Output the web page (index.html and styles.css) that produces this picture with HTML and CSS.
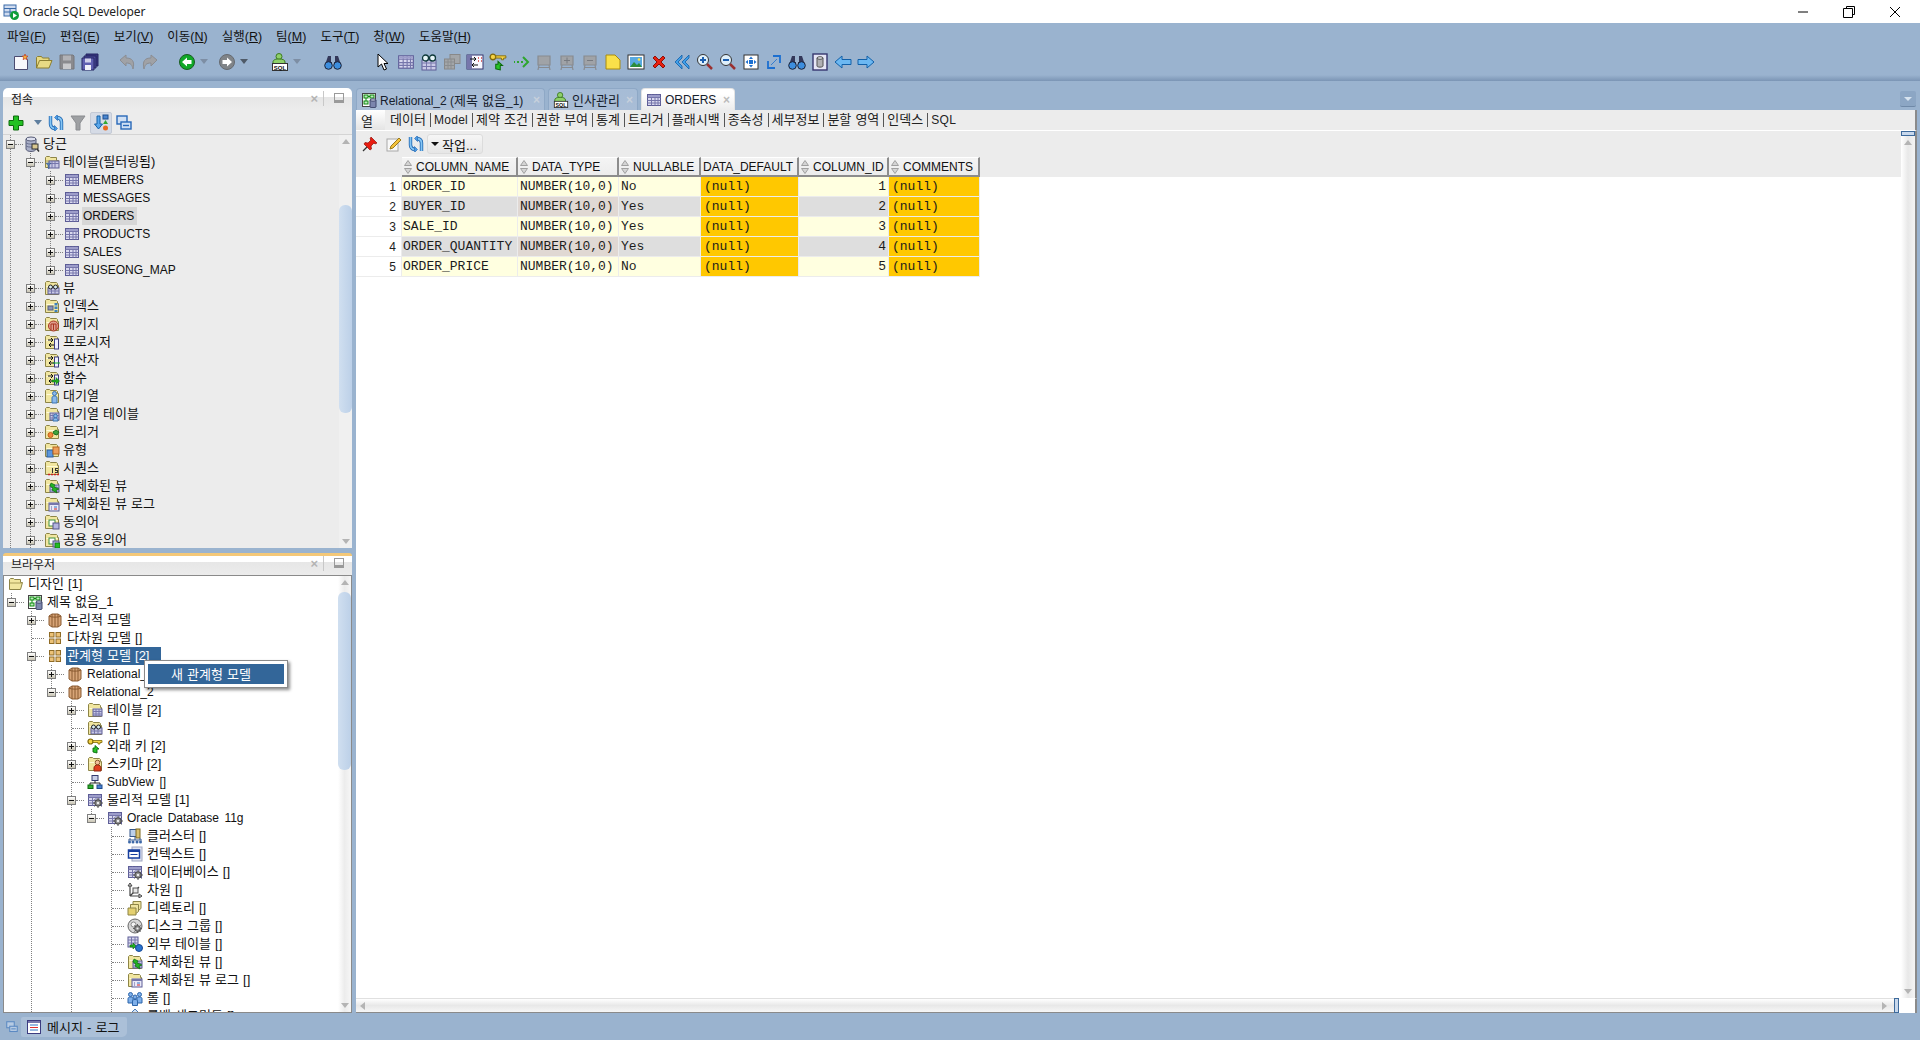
FILE: index.html
```html
<!DOCTYPE html>
<html lang="ko">
<head>
<meta charset="utf-8">
<title>Oracle SQL Developer</title>
<link rel="stylesheet" href="styles.css">
</head>
<body>
<svg class="sprites" xmlns="http://www.w3.org/2000/svg">
<defs>
<symbol id="sort" viewBox="0 0 8 14"><path d="M4 .5L7.500 5.500H.5zM.5 8.500h7L4 13.500z" fill="#d4d4d4" stroke="#a0a0a0"/></symbol>
<symbol id="folder" viewBox="0 0 16 16"><path d="M1.500 14.500v-12l1-1h3l1 1h6l1 1v2h1v9z" fill="#f1e6a0" stroke="#8d8446"/><path d="M2.500 6.500h11" stroke="#fffbd8"/></symbol>
<symbol id="folderopen" viewBox="0 0 16 16"><path d="M1.500 13.500v-10l1-1h3l1 1h6v3h2l-2 7z" fill="#f1e6a0" stroke="#8d8446"/><path d="M2 7h12" stroke="#a89c58"/></symbol>
<symbol id="tbl" viewBox="0 0 16 16"><rect x="1.500" y="2.500" width="13" height="11" fill="#d9d9ef" stroke="#5c5c96"/><path d="M1.500 5.500h13M1.500 8.500h13M1.500 11h13M5.500 2.500v11M9 2.500v11M12 2.500v11" stroke="#7676ab" fill="none"/><rect x="2" y="3" width="12" height="2" fill="#9d9dca"/></symbol>
<symbol id="gear" viewBox="0 0 10 10"><circle cx="5" cy="5" r="3.200" fill="#8c8c8c" stroke="#444"/><circle cx="5" cy="5" r="1.200" fill="#eee"/><path d="M5 0v2M5 8v2M0 5h2M8 5h2M1.500 1.500l1.400 1.400M7.100 7.100l1.400 1.400M1.500 8.500l1.400-1.400M7.100 2.900l1.400-1.400" stroke="#555"/></symbol>
<symbol id="db" viewBox="0 0 16 16"><path d="M2 3v10c0 1.500 2.500 2.500 5 2.500s5-1 5-2.500V3z" fill="#aab0c8" stroke="#555a75"/><ellipse cx="7" cy="3" rx="5" ry="2" fill="#dcdfee" stroke="#555a75"/><path d="M2 7c2 1.500 8 1.500 10 0M2 10c2 1.500 8 1.500 10 0" stroke="#6a7090" fill="none"/><rect x="8" y="8" width="6" height="5" fill="#d9c890" stroke="#333"/><path d="M13 13l2 2.500" stroke="#333" stroke-width="1.500"/></symbol>
<symbol id="ftbl" viewBox="0 0 16 16"><use href="#folder" width="16" height="16"/><rect x="6" y="7" width="9" height="7" fill="#c9c9e6" stroke="#5c5c96"/><path d="M6 9.500h9M6 12h9M9 7v7M12 7v7" stroke="#7676ab"/></symbol>
<symbol id="ffilter" viewBox="0 0 16 16"><use href="#folderopen" width="16" height="16"/><rect x="5" y="7" width="10" height="7" fill="#c9c9e6" stroke="#5c5c96"/><path d="M5 9.500h10M8 7v7M11 7v7" stroke="#7676ab"/><path d="M2 9h5l-2 2.500V15l-1-1v-2.500z" fill="#5b7fb5" stroke="#35568a" stroke-width=".5"/></symbol>
<symbol id="fview" viewBox="0 0 16 16"><use href="#folder" width="16" height="16"/><rect x="4" y="8" width="11" height="6" fill="#c9c9e6" stroke="#5c5c96"/><path d="M4 11h11M7.500 8v6M11 8v6" stroke="#7676ab"/><circle cx="6.500" cy="7" r="2" fill="#d8ecf2" stroke="#222"/><circle cx="11.500" cy="7" r="2" fill="#d8ecf2" stroke="#222"/></symbol>
<symbol id="findex" viewBox="0 0 16 16"><use href="#folder" width="16" height="16"/><rect x="4" y="8" width="5" height="4" fill="#8a93b5" stroke="#555c80"/><path d="M12 5v9" stroke="#3d82bf" stroke-width="3" stroke-dasharray="2.500 1"/></symbol>
<symbol id="fpkg" viewBox="0 0 16 16"><use href="#folder" width="16" height="16"/><circle cx="9.500" cy="10" r="5" fill="#e0a090" stroke="#a8331f"/><path d="M7 14V8h5v6M9.500 8v6" stroke="#a8331f" fill="none"/></symbol>
<symbol id="fproc" viewBox="0 0 16 16"><use href="#folder" width="16" height="16"/><rect x="10.500" y="5" width="4" height="10" fill="#eef" stroke="#3c3c80"/><path d="M4 6h5m-2-2 2 2-2 2M10 11H5m2-2-2 2 2 2" stroke="#111" fill="none"/></symbol>
<symbol id="fop" viewBox="0 0 16 16"><use href="#fproc" width="16" height="16"/><path d="M9 11h7" stroke="#11aa22"/></symbol>
<symbol id="ffunc" viewBox="0 0 16 16"><use href="#fproc" width="16" height="16"/><path d="M8 10h4V7.500l3.500 3.500-3.500 3.500V12H8z" fill="#22aa22" stroke="#0c6a0c" stroke-width=".5"/></symbol>
<symbol id="fqueue" viewBox="0 0 16 16"><use href="#folder" width="16" height="16"/><circle cx="10.500" cy="5.500" r="2" fill="#8bb8ea" stroke="#3b74b3"/><path d="M8 15v-5c0-1.500 1-2 2.500-2s2.500.5 2.500 2v5z" fill="#8bb8ea" stroke="#3b74b3"/></symbol>
<symbol id="fqtbl" viewBox="0 0 16 16"><use href="#ftbl" width="16" height="16"/><circle cx="11.500" cy="10" r="1.800" fill="#8bb8ea" stroke="#3b74b3"/><path d="M9 15c0-2 1-3 2.500-3s2.500 1 2.500 3z" fill="#8bb8ea" stroke="#3b74b3"/></symbol>
<symbol id="ftrig" viewBox="0 0 16 16"><use href="#folder" width="16" height="16"/><circle cx="6.500" cy="11" r="2.500" fill="#ef8a3c" stroke="#c45f18"/><path d="M9 8l3-2 3 2-2 3-3-1z" fill="#3fa53f" stroke="#1f701f"/></symbol>
<symbol id="ftype" viewBox="0 0 16 16"><use href="#folder" width="16" height="16"/><rect x="3" y="8" width="6" height="7" fill="#5b96dc" stroke="#2d5e9c"/><rect x="9" y="5" width="6" height="7" fill="#ec9e5c" stroke="#b5651e"/></symbol>
<symbol id="fseq" viewBox="0 0 16 16"><use href="#folder" width="16" height="16"/><path d="M8 8h1v5H8zM11 8h3v1h-2v1h2v3h-3v-1h2v-1h-2z" fill="#333"/><path d="M4 14.500h11" stroke="#c22" stroke-dasharray="2 1" stroke-width="1.500"/></symbol>
<symbol id="fmv" viewBox="0 0 16 16"><use href="#ftbl" width="16" height="16"/><path d="M7 5l4 2-1 2 5 2-3 1 1 3-5-3 1-2-3-2z" fill="#22b522" stroke="#0b6a0b" stroke-width=".7"/></symbol>
<symbol id="fmvl" viewBox="0 0 16 16"><use href="#folder" width="16" height="16"/><rect x="5" y="7" width="10" height="8" fill="#e9e9f8" stroke="#5c5c96"/><rect x="5" y="7" width="10" height="2" fill="#7676ab"/><path d="M7 11h1M7 13h1" stroke="#5c5c96"/><path d="M10 11h3" stroke="#3074c4"/><path d="M10 13h3" stroke="#d62020"/></symbol>
<symbol id="fsyn" viewBox="0 0 16 16"><use href="#folder" width="16" height="16"/><rect x="5" y="6" width="6" height="6" fill="#fff" stroke="#3e8e3e"/><rect x="9" y="9" width="6" height="6" fill="#b5b5e0" stroke="#55558a"/></symbol>
<symbol id="fpsyn" viewBox="0 0 16 16"><use href="#fsyn" width="16" height="16"/><rect x="11" y="11" width="5" height="5" fill="#22bb22" stroke="#0b6a0b" stroke-width=".7"/></symbol>
<symbol id="model" viewBox="0 0 16 16"><rect x="1.500" y="1.500" width="13" height="13" fill="#fff" stroke="#444"/><rect x="3" y="3" width="4" height="3" fill="#bfe8bf" stroke="#0a8a0a"/><rect x="3" y="9" width="4" height="3" fill="#bfe8bf" stroke="#0a8a0a"/><rect x="9" y="3" width="4" height="3" fill="#bfe8bf" stroke="#0a8a0a"/><path d="M5 6v3M7 4.500h2" stroke="#0a8a0a"/><path d="M9 8h6v7c0 .800-6 .800-6 0z" fill="#7c86ad" stroke="#40486c"/><ellipse cx="12" cy="8" rx="3" ry="1.200" fill="#c9cee2" stroke="#40486c"/></symbol>
<symbol id="cube" viewBox="0 0 16 16"><path d="M2 4l3-2h6l3 2v9l-3 2H5l-3-2z" fill="#d8a578" stroke="#8a5a30"/><path d="M5 2v13M8 2v13M11 2v13" stroke="#8a5a30"/><path d="M2 4c2 1.500 10 1.500 12 0" stroke="#8a5a30" fill="none"/></symbol>
<symbol id="boxes" viewBox="0 0 16 16"><g fill="#ecc278" stroke="#8f6b25"><rect x="2.500" y="2.500" width="4.500" height="4.500"/><rect x="9" y="2.500" width="4.500" height="4.500"/><rect x="2.500" y="9" width="4.500" height="4.500"/><rect x="9" y="9" width="4.500" height="4.500"/></g></symbol>
<symbol id="key" viewBox="0 0 16 16"><circle cx="3.500" cy="3.500" r="2.500" fill="#f4d244" stroke="#80690a" stroke-width="1.200"/><path d="M6 2.500h9v2h-2v1.500h-2V4.500H6z" fill="#f4d244" stroke="#80690a" stroke-width=".8"/><path d="M7 14v-4h2V7.500L13 11h-2v4z" transform="translate(-1 0)" fill="#28c428" stroke="#0b6a0b" stroke-width=".9"/></symbol>
<symbol id="fschema" viewBox="0 0 16 16"><use href="#folder" width="16" height="16"/><circle cx="10.500" cy="6.500" r="2.300" fill="#f0c09a" stroke="#8a5a30"/><path d="M7 15v-3c0-2 1.500-3 3.500-3s3.500 1 3.500 3v3z" fill="#e04020" stroke="#8f2410"/></symbol>
<symbol id="subview" viewBox="0 0 16 16"><rect x="5" y="1.500" width="6" height="5" fill="#c8cfe8" stroke="#333a70"/><path d="M8 7v2M3 11V9h10v2" stroke="#222" fill="none"/><rect x="1" y="11" width="5" height="3.500" fill="#30b030" stroke="#0b6a0b"/><rect x="10" y="11" width="5" height="3.500" fill="#4a80d0" stroke="#1f4c8c"/></symbol>
<symbol id="phys" viewBox="0 0 16 16"><use href="#tbl" width="16" height="16"/><use href="#gear" x="6" y="6" width="10" height="10"/></symbol>
<symbol id="cluster" viewBox="0 0 16 16"><rect x="3" y="1.500" width="8" height="7" fill="#bcd0ea" stroke="#34578c"/><rect x="9" y="1" width="4" height="9" fill="#d9c070" stroke="#7d6820"/><path d="M1 12h14M3 10v2M8 9v3M13 10v2" stroke="#34578c"/><g fill="#3d68a8"><circle cx="2.500" cy="14" r="1.500"/><circle cx="6" cy="14" r="1.500"/><circle cx="10" cy="14" r="1.500"/><circle cx="13.500" cy="14" r="1.500"/></g></symbol>
<symbol id="context" viewBox="0 0 16 16"><rect x="5" y="1" width="10" height="14" fill="#dfe3f0" stroke="#a0a6c0"/><rect x="1.500" y="4" width="11" height="8" fill="#fff" stroke="#173f9f" stroke-width="1.500"/><rect x="2" y="4" width="10" height="2" fill="#173f9f"/><path d="M3.500 8.500h7" stroke="#173f9f"/></symbol>
<symbol id="dim" viewBox="0 0 16 16"><path d="M3 14V3M3 14h11M3 14l9-9" stroke="#444" fill="none" stroke-width="1.200"/><path d="M1 4l2-3 2 3zM12 12l3 2-3 2z" fill="#ddd" stroke="#444"/><rect x="6" y="6" width="5" height="5" fill="#e8e8e8" stroke="#555"/></symbol>
<symbol id="dir" viewBox="0 0 16 16"><path d="M6 1.500h8v7l-2 1.500H6z" fill="#efe3a0" stroke="#8d8446"/><path d="M3.500 4.500h8v7l-2 1.500h-6z" fill="#efe3a0" stroke="#8d8446"/><path d="M1 8h8v7H1z" fill="#e4d070" stroke="#8d8446"/></symbol>
<symbol id="disk" viewBox="0 0 16 16"><circle cx="8" cy="8" r="7" fill="#d6d6d6" stroke="#666"/><circle cx="6.500" cy="6.500" r="2.500" fill="#f4f4f4" stroke="#888"/><use href="#gear" x="6" y="6" width="9" height="9"/></symbol>
<symbol id="ext" viewBox="0 0 16 16"><rect x="1" y="1" width="10" height="10" fill="#d9d9ef" stroke="#5c5c96"/><path d="M1 4h10M1 7h10M4.500 1v10M8 1v10" stroke="#7676ab"/><path d="M3 9h3V7l3 3-3 3v-2H3z" fill="#22b522" stroke="#0b6a0b" stroke-width=".6"/><circle cx="12" cy="12" r="3.500" fill="#2a74d0" stroke="#164a96"/></symbol>
<symbol id="roles" viewBox="0 0 16 16"><g fill="#7fb0ea" stroke="#2d65aa"><circle cx="3.500" cy="4.500" r="2"/><circle cx="12.500" cy="4.500" r="2"/><path d="M1 13V8.500c0-1 1-1.500 2.500-1.500S6 7.500 6 8.500V13zM10 13V8.500c0-1 1-1.500 2.500-1.500S15 7.500 15 8.500V13z"/><circle cx="8" cy="7" r="2"/><path d="M5.500 15.500v-4.500c0-1 1-1.500 2.500-1.500s2.500.5 2.500 1.500v4.500z"/></g></symbol>
<symbol id="rollback" viewBox="0 0 16 16"><path d="M8 1l6 6-6 6-6-6z" fill="#cfe0f4" stroke="#4b7cb8"/></symbol>
<symbol id="tnew" viewBox="0 0 18 18"><path d="M2.500 3.500h10l3 3v10h-13z" fill="#f8f8fc" stroke="#4b4b70"/><path d="M13 1l.8 2 2.200.2-1.600 1.400.5 2.100-1.900-1.100-1.900 1.100.5-2.100L10 3.200l2.200-.2z" fill="#f5b33c" stroke="#c0391e" stroke-width=".7"/></symbol>
<symbol id="topen" viewBox="0 0 18 18"><path d="M1.500 15V4.500l1-1h4l1 1.500h6.500v2.500M1.500 15l3-7.500h12.500l-3 7.500z" fill="#e8da84" stroke="#8c7f32"/></symbol>
<symbol id="tsave" viewBox="0 0 18 18"><path d="M2 2h13l1 1v13H2z" fill="#8a8a8e" stroke="#77777b"/><rect x="5" y="2.500" width="8" height="5" fill="#b2b2b6"/><rect x="5" y="10.500" width="8" height="5.500" fill="#c9c9cc"/></symbol>
<symbol id="tsaveall" viewBox="0 0 18 18"><path d="M5 1h12v12H5z" fill="#34347e" stroke="#272762"/><path d="M3 3h12v12H3z" fill="#4a4a9a" stroke="#272762"/><path d="M1 5h12v12H1z" fill="#5f5fb0" stroke="#272762"/><rect x="4" y="5.500" width="6" height="4" fill="#d0d0ea"/><rect x="4" y="12" width="6" height="5" fill="#f0f0f8"/></symbol>
<symbol id="tundo" viewBox="0 0 18 18"><path d="M2 7l6-5v3c6 0 9 3 7 11-1-4-2-6-7-6v3z" fill="#a0a2a6" stroke="#8b8d92"/></symbol>
<symbol id="tredo" viewBox="0 0 18 18"><path d="M16 7l-6-5v3c-6 0-9 3-7 11 1-4 2-6 7-6v3z" fill="#a0a2a6" stroke="#8b8d92"/></symbol>
<symbol id="tback" viewBox="0 0 18 18"><circle cx="9" cy="9" r="7.500" fill="#10a828" stroke="#1a5c22"/><path d="M4 9l5-4.500V7h4.500v4H9v2.500z" fill="#fff"/></symbol>
<symbol id="tfwd" viewBox="0 0 18 18"><circle cx="9" cy="9" r="7.500" fill="#808488" stroke="#666a70"/><path d="M14 9L9 4.500V7H4.500v4H9v2.500z" fill="#fff"/></symbol>
<symbol id="tsql" viewBox="0 0 18 18"><circle cx="8" cy="3.500" r="3" fill="#8ed06a" stroke="#3c7a20"/><path d="M2 13V9c0-2 2-3 6-3s6 1 6 3v4z" fill="#8ed06a" stroke="#3c7a20"/><rect x="1.500" y="10.500" width="15" height="7" fill="#fff" stroke="#333"/><text x="9" y="16.500" class="mini">SQL</text></symbol>
<symbol id="bino" viewBox="0 0 18 18"><path d="M4 3h3v6h4V3h3l3 9H10V9H8v3H1z" fill="#33385a"/><circle cx="4.500" cy="12.500" r="3.800" fill="#3d8ede" stroke="#1b2238"/><circle cx="13.500" cy="12.500" r="3.800" fill="#3d8ede" stroke="#1b2238"/></symbol>
<symbol id="cursor" viewBox="0 0 18 18"><path d="M4 1v13l3.500-3 2.500 6 2.500-1-2.500-5.500H14z" fill="#fff" stroke="#000"/></symbol>
<symbol id="tview" viewBox="0 0 18 18"><rect x="2" y="7" width="14" height="10" fill="#c9c9e6" stroke="#5c5c96"/><path d="M2 10h14M2 13.500h14M6.500 7v10M11 7v10" stroke="#7676ab"/><circle cx="5.500" cy="5" r="3" fill="#e5f4f6" stroke="#0f3a3a" stroke-width="1.300"/><circle cx="12.500" cy="5" r="3" fill="#e5f4f6" stroke="#0f3a3a" stroke-width="1.300"/></symbol>
<symbol id="tgray" viewBox="0 0 18 18"><rect x="7" y="1.500" width="10" height="9" fill="#a3a6a9" stroke="#888"/><rect x="1.500" y="6" width="10" height="10" fill="#a3a6a9" stroke="#888"/><path d="M1.500 9h10M1.500 12.500h10M5 6v10M8 6v10" stroke="#8a8d90"/></symbol>
<symbol id="tmap" viewBox="0 0 18 18"><rect x="1" y="2" width="16" height="14" fill="#f8f8ff" stroke="#36366e"/><rect x="1" y="2" width="5" height="14" fill="#7676ab"/><path d="M4 6h6m-2-2 2 2-2 2M12 12H6m2-2-2 2 2 2" stroke="#111" fill="none"/><path d="M12 5h1M15 5h1M12 8h1M15 8h1" stroke="#d04040" stroke-width="1.500"/></symbol>
<symbol id="tdots" viewBox="0 0 18 18"><path d="M2 9h1M5 9h2M9 9h2" stroke="#2ea52e" stroke-width="2"/><path d="M11 4l5 5-5 5" fill="none" stroke="#2ea52e" stroke-width="2"/></symbol>
<symbol id="tg" viewBox="0 0 18 18"><path d="M3 3h12v9H3zM4 12l-1 5M14 12l1 5M3 14.500h12" fill="#a0a3a7" stroke="#888b90" stroke-width="1.200"/></symbol>
<symbol id="tgp" viewBox="0 0 18 18"><use href="#tg" width="18" height="18"/><path d="M6 7.500h6M9 4.500v6" stroke="#777a80"/></symbol>
<symbol id="tgm" viewBox="0 0 18 18"><use href="#tg" width="18" height="18"/><path d="M6 7.500h6" stroke="#777a80"/></symbol>
<symbol id="note" viewBox="0 0 18 18"><path d="M2 2h9l5 5v9H2z" fill="#f9e04a" stroke="#a88b10"/></symbol>
<symbol id="pic" viewBox="0 0 18 18"><rect x="1" y="2" width="16" height="14" fill="#fff" stroke="#333"/><rect x="3" y="4" width="12" height="10" fill="#58a9e0"/><path d="M3 14l4-5 3 3 2-2 3 4z" fill="#2d8c3a"/><circle cx="12" cy="6.500" r="1.300" fill="#fbe44a"/></symbol>
<symbol id="redx" viewBox="0 0 18 18"><path d="M3 5l2-2 4 4 4-4 2 2-4 4 4 4-2 2-4-4-4 4-2-2 4-4z" fill="#e82010" stroke="#8f1008"/></symbol>
<symbol id="dbl" viewBox="0 0 18 18"><path d="M9 2L2 9l7 7v-3L5 9l4-4zM16 2L9 9l7 7v-3l-4-4 4-4z" fill="#3f9ee8" stroke="#1260a8" stroke-width=".8"/></symbol>
<symbol id="zin" viewBox="0 0 18 18"><path d="M11 11l5 5" stroke="#9a3030" stroke-width="2.500"/><circle cx="7" cy="7" r="5.500" fill="#dff0fb" stroke="#333"/><path d="M4 7h6M7 4v6" stroke="#1c5fb0" stroke-width="2"/></symbol>
<symbol id="zout" viewBox="0 0 18 18"><path d="M11 11l5 5" stroke="#9a3030" stroke-width="2.500"/><circle cx="7" cy="7" r="5.500" fill="#dff0fb" stroke="#333"/><path d="M4 7h6" stroke="#1c5fb0" stroke-width="2"/></symbol>
<symbol id="fit" viewBox="0 0 18 18"><rect x="2" y="2" width="14" height="14" fill="#fff" stroke="#333"/><path d="M9 3.500l2 2.500H7zM9 14.500L7 12h4zM3.500 9L6 7v4zM14.500 9L12 11V7z" fill="#1c6fd0"/><rect x="7" y="7" width="4" height="4" fill="#1c6fd0"/></symbol>
<symbol id="expand" viewBox="0 0 18 18"><path d="M3 8V15H10M15 10V3H8" fill="none" stroke="#1c6fd0" stroke-width="1.800"/><path d="M6 12L12 6" stroke="#1c6fd0" stroke-width=".8"/></symbol>
<symbol id="dbpage" viewBox="0 0 18 18"><rect x="2" y="1" width="14" height="16" fill="#e6e6f6" stroke="#36366e" stroke-width="1.400"/><path d="M6 5v8c0 1.500 6 1.500 6 0V5z" fill="#b0b0b4" stroke="#555"/><ellipse cx="9" cy="5" rx="3" ry="1.300" fill="#e5e5e8" stroke="#555"/></symbol>
<symbol id="aleft" viewBox="0 0 18 18"><path d="M1 9l7-6v3.500h9v5H8V15z" fill="#6cb8f2" stroke="#1260a8"/></symbol>
<symbol id="aright" viewBox="0 0 18 18"><path d="M17 9l-7-6v3.500H1v5h9V15z" fill="#6cb8f2" stroke="#1260a8"/></symbol>
<symbol id="plus" viewBox="0 0 16 16"><path d="M5.500 1h5v4.500H15v5h-4.500V15h-5v-4.500H1v-5h4.500z" fill="#22c122" stroke="#0e6a0e"/></symbol>
<symbol id="refresh" viewBox="0 0 16 16"><path d="M2.500 1v8c0 2.500 1.500 4 4 4.500" fill="none" stroke="#1c64b0" stroke-width="3.400"/><path d="M2.500 1v8c0 2.500 1.500 4 4 4.500" fill="none" stroke="#86c6f4" stroke-width="1.800"/><path d="M13.500 15V7c0-2.500-1.500-4-4-4.500" fill="none" stroke="#1c64b0" stroke-width="3.400"/><path d="M13.500 15V7c0-2.500-1.500-4-4-4.500" fill="none" stroke="#86c6f4" stroke-width="1.800"/><path d="M6.500 10.500v6l3-3zM9.500 5.500v-6l-3 3z" fill="#4a9ae6" stroke="#1c64b0" stroke-width=".6"/></symbol>
<symbol id="filter" viewBox="0 0 16 16"><path d="M1 1h14L10 8v7H6V8z" fill="#9ea0a3" stroke="#8a8c90"/></symbol>
<symbol id="sorttree" viewBox="0 0 16 18"><path d="M4 2h3v8h2.500L5.500 15 1.500 10H4z" fill="#5aa6ea" stroke="#1260a8"/><rect x="10" y="1" width="5" height="4" fill="#4a86d0" stroke="#1c4f90"/><path d="M12.500 6l2.500 4h-5z" fill="#33a833"/><circle cx="12.500" cy="14" r="2.500" fill="#e86a20"/></symbol>
<symbol id="winpair" viewBox="0 0 16 16"><rect x="1" y="1" width="10" height="8" fill="#d0e0f4" stroke="#2868b8" stroke-width="1.400"/><rect x="5" y="7" width="10" height="7" fill="#d0e0f4" stroke="#2868b8" stroke-width="1.400"/><path d="M7 10.500h6" stroke="#2868b8" stroke-width="1.400"/></symbol>
<symbol id="pin" viewBox="0 0 16 16"><path d="M9 1l6 6-2 1-1-1-3 3 .5 3-1.500 1-6-6 1-1.500 3 .5 3-3-1-1z" fill="#e81c10" stroke="#8f1008" stroke-width=".7"/><path d="M5 11l-4 4" stroke="#333" stroke-width="1.300"/></symbol>
<symbol id="edit" viewBox="0 0 16 16"><rect x="2" y="3" width="11" height="12" fill="#f8f8f8" stroke="#a8a8a8"/><path d="M5 13l1-3 8-8 2 2-8 8z" fill="#f5c33c" stroke="#9a7a1c"/></symbol>
<symbol id="log" viewBox="0 0 16 16"><rect x="1.500" y="1.500" width="13" height="13" fill="#fff" stroke="#3c3c80"/><rect x="2" y="2" width="12" height="2" fill="#7676ab"/><path d="M4 6h8" stroke="#3074c4"/><path d="M4 8.500h8" stroke="#e03030"/><path d="M4 11h8" stroke="#3074c4"/></symbol>
<symbol id="appicon" viewBox="0 0 16 16"><rect x="1" y="1" width="12" height="11" fill="#d0dcf0" stroke="#3a6aa8"/><path d="M1 4.500h12M1 8h12M7 4.500V12" stroke="#3a6aa8"/><circle cx="11.500" cy="11.500" r="4.500" fill="#0f9e3a"/><path d="M10 9l4 2.500-4 2.500z" fill="#fff"/></symbol>
</defs>
</svg>

<header class="titlebar">
  <svg class="appicon"><use href="#appicon"/></svg>
  <span class="apptitle">Oracle SQL Developer</span>
  <div class="winbtns">
    <svg class="winbtn" viewBox="0 0 12 12"><path d="M1 6h10" stroke="#000"/></svg>
    <svg class="winbtn" viewBox="0 0 12 12"><path d="M3.500 2.500v-2h8v8h-2M.5 2.500h9v9h-9z" fill="#fff" stroke="#000"/></svg>
    <svg class="winbtn" viewBox="0 0 12 12"><path d="M1 1l10 10M11 1L1 11" stroke="#000"/></svg>
  </div>
</header>

<nav class="menubar">
  <span class="menu">파일(<u>F</u>)</span>
  <span class="menu">편집(<u>E</u>)</span>
  <span class="menu">보기(<u>V</u>)</span>
  <span class="menu">이동(<u>N</u>)</span>
  <span class="menu">실행(<u>R</u>)</span>
  <span class="menu">팀(<u>M</u>)</span>
  <span class="menu">도구(<u>T</u>)</span>
  <span class="menu">창(<u>W</u>)</span>
  <span class="menu">도움말(<u>H</u>)</span>
</nav>

<div class="toolbar">
  <svg class="tb"><use href="#tnew"/></svg>
  <svg class="tb"><use href="#topen"/></svg>
  <svg class="tb"><use href="#tsave"/></svg>
  <svg class="tb"><use href="#tsaveall"/></svg>
  <svg class="tb sp14"><use href="#tundo"/></svg>
  <svg class="tb"><use href="#tredo"/></svg>
  <svg class="tb sp14"><use href="#tback"/></svg>
  <i class="drop light"></i>
  <svg class="tb"><use href="#tfwd"/></svg>
  <i class="drop"></i>
  <svg class="tb sp10"><use href="#tsql"/></svg>
  <i class="drop light"></i>
  <svg class="tb sp10"><use href="#bino"/></svg>
  <svg class="tb sp28"><use href="#cursor"/></svg>
  <svg class="tb"><use href="#tbl"/></svg>
  <svg class="tb"><use href="#tview"/></svg>
  <svg class="tb"><use href="#tgray"/></svg>
  <svg class="tb"><use href="#tmap"/></svg>
  <svg class="tb"><use href="#key"/></svg>
  <svg class="tb"><use href="#tdots"/></svg>
  <svg class="tb"><use href="#tg"/></svg>
  <svg class="tb"><use href="#tgp"/></svg>
  <svg class="tb"><use href="#tgm"/></svg>
  <svg class="tb"><use href="#note"/></svg>
  <svg class="tb"><use href="#pic"/></svg>
  <svg class="tb"><use href="#redx"/></svg>
  <svg class="tb"><use href="#dbl"/></svg>
  <svg class="tb"><use href="#zin"/></svg>
  <svg class="tb"><use href="#zout"/></svg>
  <svg class="tb"><use href="#fit"/></svg>
  <svg class="tb"><use href="#expand"/></svg>
  <svg class="tb"><use href="#bino"/></svg>
  <svg class="tb"><use href="#dbpage"/></svg>
  <svg class="tb"><use href="#aleft"/></svg>
  <svg class="tb"><use href="#aright"/></svg>
</div>
<div class="toolsep"></div>

<main class="workspace">
  <div class="leftcol">
    <section class="panel conn">
      <div class="phead rounded"><span class="ptitle">접속</span><span class="pclose">×</span><span class="pdiv"></span><span class="pmin"></span></div>
      <div class="ptools">
        <svg class="pt"><use href="#plus"/></svg><i class="drop small"></i>
        <svg class="pt"><use href="#refresh"/></svg>
        <svg class="pt tight"><use href="#filter"/></svg>
        <span class="toggle"><svg class="pt2"><use href="#sorttree"/></svg></span>
        <svg class="pt"><use href="#winpair"/></svg>
      </div>
      <div class="treewrap gray">
        <div class="tree top">
          <div class="row"><i class="cell v"><b class="box minus"></b><b class="dash"></b></i><svg class="ic"><use href="#db"/></svg><span class="t">당근</span></div>
          <div class="row"><i class="cell v"></i><i class="cell v"><b class="box minus"></b><b class="dash"></b></i><svg class="ic"><use href="#ffilter"/></svg><span class="t">테이블(필터링됨)</span></div>
          <div class="row"><i class="cell v"></i><i class="cell v"></i><i class="cell v"><b class="box"></b><b class="dash"></b></i><svg class="ic"><use href="#tbl"/></svg><span class="t lat">MEMBERS</span></div>
          <div class="row"><i class="cell v"></i><i class="cell v"></i><i class="cell v"><b class="box"></b><b class="dash"></b></i><svg class="ic"><use href="#tbl"/></svg><span class="t lat">MESSAGES</span></div>
          <div class="row"><i class="cell v"></i><i class="cell v"></i><i class="cell v"><b class="box"></b><b class="dash"></b></i><svg class="ic"><use href="#tbl"/></svg><span class="t lat hl">ORDERS</span></div>
          <div class="row"><i class="cell v"></i><i class="cell v"></i><i class="cell v"><b class="box"></b><b class="dash"></b></i><svg class="ic"><use href="#tbl"/></svg><span class="t lat">PRODUCTS</span></div>
          <div class="row"><i class="cell v"></i><i class="cell v"></i><i class="cell v"><b class="box"></b><b class="dash"></b></i><svg class="ic"><use href="#tbl"/></svg><span class="t lat">SALES</span></div>
          <div class="row"><i class="cell v"></i><i class="cell v"></i><i class="cell ve"><b class="box"></b><b class="dash"></b></i><svg class="ic"><use href="#tbl"/></svg><span class="t lat">SUSEONG_MAP</span></div>
          <div class="row"><i class="cell v"></i><i class="cell v"><b class="box"></b><b class="dash"></b></i><svg class="ic"><use href="#fview"/></svg><span class="t">뷰</span></div>
          <div class="row"><i class="cell v"></i><i class="cell v"><b class="box"></b><b class="dash"></b></i><svg class="ic"><use href="#findex"/></svg><span class="t">인덱스</span></div>
          <div class="row"><i class="cell v"></i><i class="cell v"><b class="box"></b><b class="dash"></b></i><svg class="ic"><use href="#fpkg"/></svg><span class="t">패키지</span></div>
          <div class="row"><i class="cell v"></i><i class="cell v"><b class="box"></b><b class="dash"></b></i><svg class="ic"><use href="#fproc"/></svg><span class="t">프로시저</span></div>
          <div class="row"><i class="cell v"></i><i class="cell v"><b class="box"></b><b class="dash"></b></i><svg class="ic"><use href="#fop"/></svg><span class="t">연산자</span></div>
          <div class="row"><i class="cell v"></i><i class="cell v"><b class="box"></b><b class="dash"></b></i><svg class="ic"><use href="#ffunc"/></svg><span class="t">함수</span></div>
          <div class="row"><i class="cell v"></i><i class="cell v"><b class="box"></b><b class="dash"></b></i><svg class="ic"><use href="#fqueue"/></svg><span class="t">대기열</span></div>
          <div class="row"><i class="cell v"></i><i class="cell v"><b class="box"></b><b class="dash"></b></i><svg class="ic"><use href="#fqtbl"/></svg><span class="t">대기열 테이블</span></div>
          <div class="row"><i class="cell v"></i><i class="cell v"><b class="box"></b><b class="dash"></b></i><svg class="ic"><use href="#ftrig"/></svg><span class="t">트리거</span></div>
          <div class="row"><i class="cell v"></i><i class="cell v"><b class="box"></b><b class="dash"></b></i><svg class="ic"><use href="#ftype"/></svg><span class="t">유형</span></div>
          <div class="row"><i class="cell v"></i><i class="cell v"><b class="box"></b><b class="dash"></b></i><svg class="ic"><use href="#fseq"/></svg><span class="t">시퀀스</span></div>
          <div class="row"><i class="cell v"></i><i class="cell v"><b class="box"></b><b class="dash"></b></i><svg class="ic"><use href="#fmv"/></svg><span class="t">구체화된 뷰</span></div>
          <div class="row"><i class="cell v"></i><i class="cell v"><b class="box"></b><b class="dash"></b></i><svg class="ic"><use href="#fmvl"/></svg><span class="t">구체화된 뷰 로그</span></div>
          <div class="row"><i class="cell v"></i><i class="cell v"><b class="box"></b><b class="dash"></b></i><svg class="ic"><use href="#fsyn"/></svg><span class="t">동의어</span></div>
          <div class="row"><i class="cell v"></i><i class="cell v"><b class="box"></b><b class="dash"></b></i><svg class="ic"><use href="#fpsyn"/></svg><span class="t">공용 동의어</span></div>
        </div>
        <div class="vscroll gray"><i class="arr up"></i><i class="thumb thumb1"></i><i class="grow"></i><i class="arr down"></i></div>
      </div>
    </section>

    <section class="panel browser">
      <div class="phead accent"><span class="ptitle">브라우저</span><span class="pclose">×</span><span class="pdiv"></span><span class="pmin"></span></div>
      <div class="treewrap white framed">
        <div class="tree bottom">
          <div class="row rootrow"><svg class="ic"><use href="#folderopen"/></svg><span class="t">디자인 [1]</span></div>
          <div class="row"><i class="cell ve"><b class="box minus"></b><b class="dash"></b></i><svg class="ic"><use href="#model"/></svg><span class="t">제목 없음_1</span></div>
          <div class="row"><i class="cell"></i><i class="cell v"><b class="box"></b><b class="dash"></b></i><svg class="ic"><use href="#cube"/></svg><span class="t">논리적 모델</span></div>
          <div class="row"><i class="cell"></i><i class="cell v leaf"><b class="dash"></b></i><svg class="ic"><use href="#boxes"/></svg><span class="t">다차원 모델 []</span></div>
          <div class="row"><i class="cell"></i><i class="cell v"><b class="box minus"></b><b class="dash"></b></i><svg class="ic"><use href="#boxes"/></svg><span class="t sel">관계형 모델 [2]</span></div>
          <div class="row"><i class="cell"></i><i class="cell v"></i><i class="cell v"><b class="box"></b><b class="dash"></b></i><svg class="ic"><use href="#cube"/></svg><span class="t lat">Relational_1</span></div>
          <div class="row"><i class="cell"></i><i class="cell v"></i><i class="cell ve"><b class="box minus"></b><b class="dash"></b></i><svg class="ic"><use href="#cube"/></svg><span class="t lat">Relational_2</span></div>
          <div class="row"><i class="cell"></i><i class="cell v"></i><i class="cell"></i><i class="cell v"><b class="box"></b><b class="dash"></b></i><svg class="ic"><use href="#ftbl"/></svg><span class="t">테이블 [2]</span></div>
          <div class="row"><i class="cell"></i><i class="cell v"></i><i class="cell"></i><i class="cell v leaf"><b class="dash"></b></i><svg class="ic"><use href="#fview"/></svg><span class="t">뷰 []</span></div>
          <div class="row"><i class="cell"></i><i class="cell v"></i><i class="cell"></i><i class="cell v"><b class="box"></b><b class="dash"></b></i><svg class="ic"><use href="#key"/></svg><span class="t">외래 키 [2]</span></div>
          <div class="row"><i class="cell"></i><i class="cell v"></i><i class="cell"></i><i class="cell v"><b class="box"></b><b class="dash"></b></i><svg class="ic"><use href="#fschema"/></svg><span class="t">스키마 [2]</span></div>
          <div class="row"><i class="cell"></i><i class="cell v"></i><i class="cell"></i><i class="cell v leaf"><b class="dash"></b></i><svg class="ic"><use href="#subview"/></svg><span class="t lat">SubView []</span></div>
          <div class="row"><i class="cell"></i><i class="cell v"></i><i class="cell"></i><i class="cell v"><b class="box minus"></b><b class="dash"></b></i><svg class="ic"><use href="#phys"/></svg><span class="t">물리적 모델 [1]</span></div>
          <div class="row"><i class="cell"></i><i class="cell v"></i><i class="cell"></i><i class="cell v"></i><i class="cell ve"><b class="box minus"></b><b class="dash"></b></i><svg class="ic"><use href="#phys"/></svg><span class="t lat">Oracle Database 11g</span></div>
          <div class="row"><i class="cell"></i><i class="cell v"></i><i class="cell"></i><i class="cell v"></i><i class="cell"></i><i class="cell v leaf"><b class="dash"></b></i><svg class="ic"><use href="#cluster"/></svg><span class="t">클러스터 []</span></div>
          <div class="row"><i class="cell"></i><i class="cell v"></i><i class="cell"></i><i class="cell v"></i><i class="cell"></i><i class="cell v leaf"><b class="dash"></b></i><svg class="ic"><use href="#context"/></svg><span class="t">컨텍스트 []</span></div>
          <div class="row"><i class="cell"></i><i class="cell v"></i><i class="cell"></i><i class="cell v"></i><i class="cell"></i><i class="cell v leaf"><b class="dash"></b></i><svg class="ic"><use href="#phys"/></svg><span class="t">데이터베이스 []</span></div>
          <div class="row"><i class="cell"></i><i class="cell v"></i><i class="cell"></i><i class="cell v"></i><i class="cell"></i><i class="cell v leaf"><b class="dash"></b></i><svg class="ic"><use href="#dim"/></svg><span class="t">차원 []</span></div>
          <div class="row"><i class="cell"></i><i class="cell v"></i><i class="cell"></i><i class="cell v"></i><i class="cell"></i><i class="cell v leaf"><b class="dash"></b></i><svg class="ic"><use href="#dir"/></svg><span class="t">디렉토리 []</span></div>
          <div class="row"><i class="cell"></i><i class="cell v"></i><i class="cell"></i><i class="cell v"></i><i class="cell"></i><i class="cell v leaf"><b class="dash"></b></i><svg class="ic"><use href="#disk"/></svg><span class="t">디스크 그룹 []</span></div>
          <div class="row"><i class="cell"></i><i class="cell v"></i><i class="cell"></i><i class="cell v"></i><i class="cell"></i><i class="cell v leaf"><b class="dash"></b></i><svg class="ic"><use href="#ext"/></svg><span class="t">외부 테이블 []</span></div>
          <div class="row"><i class="cell"></i><i class="cell v"></i><i class="cell"></i><i class="cell v"></i><i class="cell"></i><i class="cell v leaf"><b class="dash"></b></i><svg class="ic"><use href="#fmv"/></svg><span class="t">구체화된 뷰 []</span></div>
          <div class="row"><i class="cell"></i><i class="cell v"></i><i class="cell"></i><i class="cell v"></i><i class="cell"></i><i class="cell v leaf"><b class="dash"></b></i><svg class="ic"><use href="#fmvl"/></svg><span class="t">구체화된 뷰 로그 []</span></div>
          <div class="row"><i class="cell"></i><i class="cell v"></i><i class="cell"></i><i class="cell v"></i><i class="cell"></i><i class="cell v leaf"><b class="dash"></b></i><svg class="ic"><use href="#roles"/></svg><span class="t">롤 []</span></div>
          <div class="row"><i class="cell"></i><i class="cell v"></i><i class="cell"></i><i class="cell v"></i><i class="cell"></i><i class="cell v leaf"><b class="dash"></b></i><svg class="ic"><use href="#rollback"/></svg><span class="t">롤백 세그먼트 []</span></div>
        </div>
        <div class="vscroll"><i class="arr up"></i><i class="thumb thumb2"></i><i class="grow"></i><i class="arr down"></i></div>
        <div class="ctxmenu"><div class="ctxitem">새 관계형 모델</div></div>
      </div>
    </section>
  </div>

  <section class="editor">
    <div class="tabs">
      <div class="tab tab-model"><svg class="ic"><use href="#model"/></svg><span>Relational_2 (<span class="ko">제목 없음</span>_1)</span><span class="tclose">×</span></div>
      <div class="tab tab-sql"><svg class="ic"><use href="#tsql"/></svg><span class="ko">인사관리</span><span class="tclose">×</span></div>
      <div class="tab tab-orders active"><svg class="ic"><use href="#tbl"/></svg><span>ORDERS</span><span class="tclose">×</span></div>
      <div class="tabmenu"><i class="tabarrow"></i></div>
    </div>
    <div class="subtabs">
      <span class="subactive">열</span>
      <span class="sub">데이터</span><span class="sub lat">Model</span><span class="sub">제약 조건</span><span class="sub">권한 부여</span><span class="sub">통계</span><span class="sub">트리거</span><span class="sub">플래시백</span><span class="sub">종속성</span><span class="sub">세부정보</span><span class="sub">분할 영역</span><span class="sub">인덱스</span><span class="sub lat">SQL</span>
    </div>
    <div class="gridbody">
      <div class="gridmain">
        <div class="gridtools">
          <svg class="pt"><use href="#pin"/></svg>
          <svg class="pt"><use href="#edit"/></svg>
          <svg class="pt"><use href="#refresh"/></svg>
          <span class="actions"><i class="caret"></i><span class="ko">작업...</span></span>
        </div>
        <div class="gridscroll">
          <table class="grid">
            <colgroup><col class="c0"><col class="c1"><col class="c2"><col class="c3"><col class="c4"><col class="c5"><col class="c6"></colgroup>
            <thead>
              <tr><th class="corner"></th><th><svg class="sort"><use href="#sort"/></svg>COLUMN_NAME</th><th><svg class="sort"><use href="#sort"/></svg>DATA_TYPE</th><th><svg class="sort"><use href="#sort"/></svg>NULLABLE</th><th>DATA_DEFAULT</th><th><svg class="sort"><use href="#sort"/></svg>COLUMN_ID</th><th><svg class="sort"><use href="#sort"/></svg>COMMENTS</th></tr>
            </thead>
            <tbody>
              <tr><td class="num">1</td><td class="nm">ORDER_ID</td><td>NUMBER(10,0)</td><td>No</td><td class="nul">(null)</td><td class="idc">1</td><td class="nul">(null)</td></tr>
              <tr class="even"><td class="num">2</td><td class="nm">BUYER_ID</td><td class="dt">NUMBER(10,0)</td><td>Yes</td><td class="nul">(null)</td><td class="idc">2</td><td class="nul">(null)</td></tr>
              <tr><td class="num">3</td><td class="nm">SALE_ID</td><td>NUMBER(10,0)</td><td>Yes</td><td class="nul">(null)</td><td class="idc">3</td><td class="nul">(null)</td></tr>
              <tr class="even"><td class="num">4</td><td class="nm">ORDER_QUANTITY</td><td class="dt">NUMBER(10,0)</td><td>Yes</td><td class="nul">(null)</td><td class="idc">4</td><td class="nul">(null)</td></tr>
              <tr><td class="num">5</td><td class="nm">ORDER_PRICE</td><td>NUMBER(10,0)</td><td>No</td><td class="nul">(null)</td><td class="idc">5</td><td class="nul">(null)</td></tr>
            </tbody>
          </table>
        </div>
      </div>
      <div class="vscroll wide"><i class="split"></i><i class="arr up"></i><i class="grow"></i><i class="arr down"></i></div>
    </div>
    <div class="hbar"><i class="arr left"></i><i class="grow"></i><i class="arr right"></i><i class="hsplit"></i><i class="corner2"></i></div>
  </section>
</main>

<footer class="statusbar">
  <svg class="sw"><use href="#winpair"/></svg>
  <div class="logtab"><svg class="ic"><use href="#log"/></svg><span class="ko">메시지 - 로그</span></div>
</footer>
</body>
</html>
```

FILE: styles.css
```css
* { box-sizing: border-box; }
html, body { margin: 0; height: 100%; }
body {
  width: 1920px; height: 1040px; overflow: hidden;
  display: flex; flex-direction: column;
  background: #9ab3cf; color: #111;
  font: 12px "Liberation Sans", "Noto Sans CJK KR", sans-serif;
}
.sprites { width: 0; height: 0; position: absolute; }
.mini { font: bold 6px "Liberation Sans", sans-serif; text-anchor: middle; fill: #111; }
i, b { display: block; font-style: normal; }
.ko { font-size: 13px; word-spacing: .5px; }

.titlebar { height: 23px; background: #fff; display: flex; align-items: center; padding-left: 3px; flex: none; }
.appicon { width: 16px; height: 16px; }
.apptitle { margin-left: 4px; font: 12px "Noto Sans", sans-serif; color: #222; }
.winbtns { margin-left: auto; display: flex; gap: 34px; padding-right: 19px; }
.winbtn { width: 12px; height: 12px; }

.menubar { height: 25px; display: flex; align-items: center; padding-left: 7px; gap: 14px; flex: none; font-size: 12.5px; }
.menu { color: #111; }

.toolbar { height: 27px; display: flex; align-items: center; padding-left: 12px; flex: none; }
.tb { width: 18px; height: 18px; margin-right: 5px; flex: none; }
.sp14 { margin-left: 14px; }
.sp10 { margin-left: 13px; }
.sp28 { margin-left: 27px; }
.drop { width: 0; height: 0; border: 4px solid transparent; border-top: 5px solid #4f5a68; border-bottom: 0; margin: 0 10px 0 -1px; }
.drop.light { border-top-color: #7d8ea4; }
.drop.small { margin: 0 6px 0 4px; border-top-color: #5f7f9f; }
.toolsep { height: 6px; flex: none; background: linear-gradient(#9ab3cf, #7b95b5); }

.workspace { flex: 1; min-height: 0; display: flex; gap: 4px; padding: 7px 3px 0 3px; }
.leftcol { width: 349px; flex: none; display: flex; flex-direction: column; gap: 5px; }
.panel { display: flex; flex-direction: column; min-height: 0; }
.conn { height: 460px; flex: none; }
.browser { flex: 1; }

.phead { height: 22px; flex: none; display: flex; align-items: center; padding: 0 8px 2px 8px; background: linear-gradient(#fff 0 9px, #e6e6e6 9px, #ececec); }
.phead.rounded { border-radius: 5px 5px 0 0; }
.phead.accent { height: 22px; border-top: 3px solid #f4c878; border-radius: 3px 3px 0 0; padding-bottom: 5px; background: linear-gradient(#fff 0 6px, #e6e6e6 6px, #ececec); }
.ptitle { color: #222; }
.pclose { margin-left: auto; color: #b4b4b4; font-size: 13px; font-weight: bold; }
.pdiv { width: 1px; height: 15px; background: #c8c8c8; margin: 0 10px 0 5px; }
.pmin { width: 10px; height: 10px; border: 1px solid #9a9a9a; background: linear-gradient(transparent 6px, #9a9a9a 6px, #9a9a9a 8px, transparent 8px); }
.ptools { height: 25px; flex: none; background: #ececec; display: flex; align-items: center; padding: 1px 0 0 5px; border-bottom: 1px solid #d4d4d4; }
.pt { width: 16px; height: 16px; margin-right: 6px; flex: none; }
.pt.tight { margin-right: 4px; }
.pt2 { width: 16px; height: 18px; }
.toggle { width: 22px; height: 22px; display: flex; align-items: center; justify-content: center; background: #d5dbe6; border: 1px solid #c4cad6; border-radius: 2px; margin-right: 4px; }

.treewrap { flex: 1; min-height: 0; display: flex; overflow: hidden; position: relative; }
.treewrap.gray { background: #ececec; }
.treewrap.white { background: #fff; }
.treewrap.framed { border: 1px solid #8a8a8a; }
.tree { flex: 1; min-width: 0; overflow: hidden; }
.tree.bottom { margin-top: -1px; }
.row { height: 18px; display: flex; align-items: center; white-space: nowrap; }
.rootrow { padding-left: 1px; }
.cell { width: 20px; height: 18px; flex: none; display: flex; align-items: center; padding-left: 3px; }
.cell.leaf { padding-left: 8px; }
.v { background: repeating-linear-gradient(#808080 0 1px, transparent 1px 2px) 7px 0 / 1px 100% no-repeat; }
.ve { background: repeating-linear-gradient(#808080 0 1px, transparent 1px 2px) 7px 0 / 1px 9px no-repeat; }
.dash { flex: 1; border-top: 1px dotted #808080; }
.box { width: 9px; height: 9px; flex: none; border: 1px solid #7f7f7f; background:
  linear-gradient(#111, #111) center / 5px 1px no-repeat,
  linear-gradient(#111, #111) center / 1px 5px no-repeat,
  linear-gradient(#fff, #c9c5b4); }
.box.minus { background:
  linear-gradient(#111, #111) center / 5px 1px no-repeat,
  linear-gradient(#fff, #c9c5b4); }
.ic { width: 16px; height: 16px; flex: none; margin-left: 1px; }
.t { margin-left: 3px; padding: 0 1px; font-size: 13px; line-height: 18px; word-spacing: .5px; color: #111; }
.t.lat { font-size: 12px; word-spacing: 2px; }
.top .row .t { margin-left: 2px; }
.bottom .ic { margin-left: 3px; }
.bottom .t { margin-left: 3px; }
.hl { background: #d7d7d7; padding: 0 3px 0 1px; }
.sel { background: #336699; color: #fff; padding: 0 12px 0 1px; }

.vscroll { width: 13px; flex: none; display: flex; flex-direction: column; align-items: center; background: linear-gradient(90deg, #fff, #ececec 50%, #f6f6f6); }
.vscroll.gray { background: #f0f0f0; }
.vscroll.wide { width: 14px; background: linear-gradient(90deg, #fff, #e8e8e8 50%, #f4f4f4); }
.arr { width: 0; height: 0; flex: none; border: 4px solid transparent; }
.arr.up { border-bottom: 5px solid #b4b4b4; border-top: 0; margin-top: 4px; }
.arr.down { border-top: 5px solid #b4b4b4; border-bottom: 0; margin-bottom: 4px; }
.arr.left { border-right: 5px solid #b4b4b4; border-left: 0; margin-left: 4px; }
.arr.right { border-left: 5px solid #b4b4b4; border-right: 0; margin-right: 4px; }
.grow { flex: 1; }
.thumb { width: 13px; border-radius: 6px; background: linear-gradient(90deg, #d0dff0, #bcd0e8); flex: none; }
.thumb1 { height: 208px; margin-top: 61px; }
.thumb2 { height: 178px; margin-top: 7px; }
.split { width: 14px; height: 5px; border: 1px solid #3d6a9c; background: #c8d8ec; flex: none; }

.ctxmenu { position: absolute; left: 140px; top: 84px; width: 144px; height: 28px; padding: 3px; background: #fff; border: 1px solid #8a8a8a; box-shadow: 2px 2px 3px rgba(0,0,0,.45); z-index: 2; }
.ctxitem { height: 100%; padding-right: 10px; background: #336699; color: #fff; text-align: center; font-size: 13px; line-height: 21px; word-spacing: .5px; }

.editor { flex: 1; min-width: 0; display: flex; flex-direction: column; }
.tabs { height: 22px; flex: none; display: flex; align-items: flex-end; gap: 3px; }
.tab { height: 22px; display: flex; align-items: center; padding: 0 4px; gap: 3px; border-radius: 4px 4px 0 0; background: linear-gradient(#a6bcd6, #a9bdd6); border: 1px solid #8ea8c6; border-bottom: 0; color: #16202c; }
.tab-model { width: 189px; }
.tab-sql { width: 90px; }
.tab-orders { width: 94px; }
.tab .ic { margin-left: 0; }
.tab.active { background: linear-gradient(#fff 0 5px, #ececec); border-color: #e4e4e4; }
.tclose { color: #c6d0dc; font-weight: bold; font-size: 12px; margin-left: auto; }
.tab.active .tclose { color: #bbb; }
.tabmenu { margin-left: auto; width: 16px; height: 16px; margin-bottom: 3px; margin-right: 1px; border-radius: 2px; background: #8ca6c4; border-bottom: 1px solid #6f89a8; display: flex; align-items: center; justify-content: center; }
.tabarrow { width: 0; height: 0; border: 4px solid transparent; border-top: 4px solid #d8e4f0; border-bottom: 0; }

.subtabs { height: 21px; flex: none; background: #ececec; display: flex; align-items: center; border-bottom: 1px solid #fff; border-right: 2px solid #8a8a8a; color: #222; font-size: 13px; word-spacing: .5px; }
.subactive { width: 29px; height: 20px; display: flex; align-items: center; padding-left: 5px; background: linear-gradient(#fff, #e4e4e4); margin-right: 5px; }
.sub { padding: 0 4px 0 0; line-height: 14px; border-right: 1px solid #555; margin-right: 3px; }
.sub.lat { font-size: 12px; letter-spacing: .3px; }
.sub:last-child { border-right: 0; }

.gridbody { flex: 1; min-height: 0; display: flex; background: #fff; border-right: 2px solid #8a8a8a; }
.gridmain { flex: 1; min-width: 0; display: flex; flex-direction: column; }
.gridtools { height: 26px; flex: none; background: #ececec; display: flex; align-items: center; padding-left: 6px; }
.gridtools .pt { margin-right: 7px; }
.actions { height: 20px; width: 56px; display: flex; align-items: center; gap: 3px; padding-left: 3px; margin-left: -4px; border: 1px solid #dcdcdc; border-radius: 3px; background: linear-gradient(#f6f6f6, #e6e6e6); }
.caret { width: 0; height: 0; flex: none; border: 4px solid transparent; border-top: 4px solid #111; border-bottom: 0; }
.gridscroll { flex: 1; min-height: 0; background: linear-gradient(#ececec 20px, #fff 20px); }

.grid { border-collapse: separate; border-spacing: 0; table-layout: fixed; width: 624px; }
.c0 { width: 46px; } .c1 { width: 116px; } .c2 { width: 101px; } .c3 { width: 82px; } .c4 { width: 98px; } .c5 { width: 90px; } .c6 { width: 91px; }
.grid th { height: 20px; padding: 0 0 0 2px; font-weight: normal; text-align: left; white-space: nowrap; color: #111; background: linear-gradient(#f4f4f4, #ececec); border-top: 1px solid #fff; border-right: 2px solid #8c8c8c; border-bottom: 2px solid #8c8c8c; }
.grid th.corner { background: #ececec; border: 0; }
.sort { display: inline-block; width: 8px; height: 14px; margin-right: 4px; vertical-align: -3px; }
.grid td { height: 20px; padding: 0 0 0 2px; font: 13px "Liberation Mono", monospace; color: #1c1c1c; background: #ffffe0; border-right: 1px solid #ececec; border-bottom: 1px solid #ececec; white-space: nowrap; overflow: hidden; }
.grid td.nm { padding-left: 1px; }
.grid .even td { background: #dedede; }
.grid td.num { font: 12px "Liberation Sans", sans-serif; text-align: right; padding-right: 5px; background: #fff; }
.grid .even td.num { background: #fff; }
.grid .even td.dt { background: #e0d8d3; }
.grid td.nul, .grid .even td.nul { background: #ffc800; padding-left: 3px; }
.grid td.idc { text-align: right; padding-right: 2px; }

.hbar { height: 15px; flex: none; display: flex; align-items: center; background: linear-gradient(#fff, #e8e8e8 50%, #f6f6f6); border-top: 1px solid #e0e0e0; border-right: 2px solid #8a8a8a; border-bottom: 1px solid #8a8a8a; }
.hsplit { width: 5px; height: 15px; border: 1px solid #3d6a9c; background: #c8d8ec; margin-left: 3px; flex: none; }
.corner2 { width: 16px; height: 15px; background: #fff; flex: none; }

.statusbar { height: 27px; flex: none; display: flex; align-items: center; padding-left: 6px; }
.sw { width: 12px; height: 12px; margin-right: 3px; opacity: .55; }
.logtab { height: 20px; width: 106px; display: flex; align-items: center; gap: 5px; padding-left: 5px; background: #abc0d8; border-radius: 2px 2px 5px 2px; }
.logtab .ic { margin-left: 0; }
```
